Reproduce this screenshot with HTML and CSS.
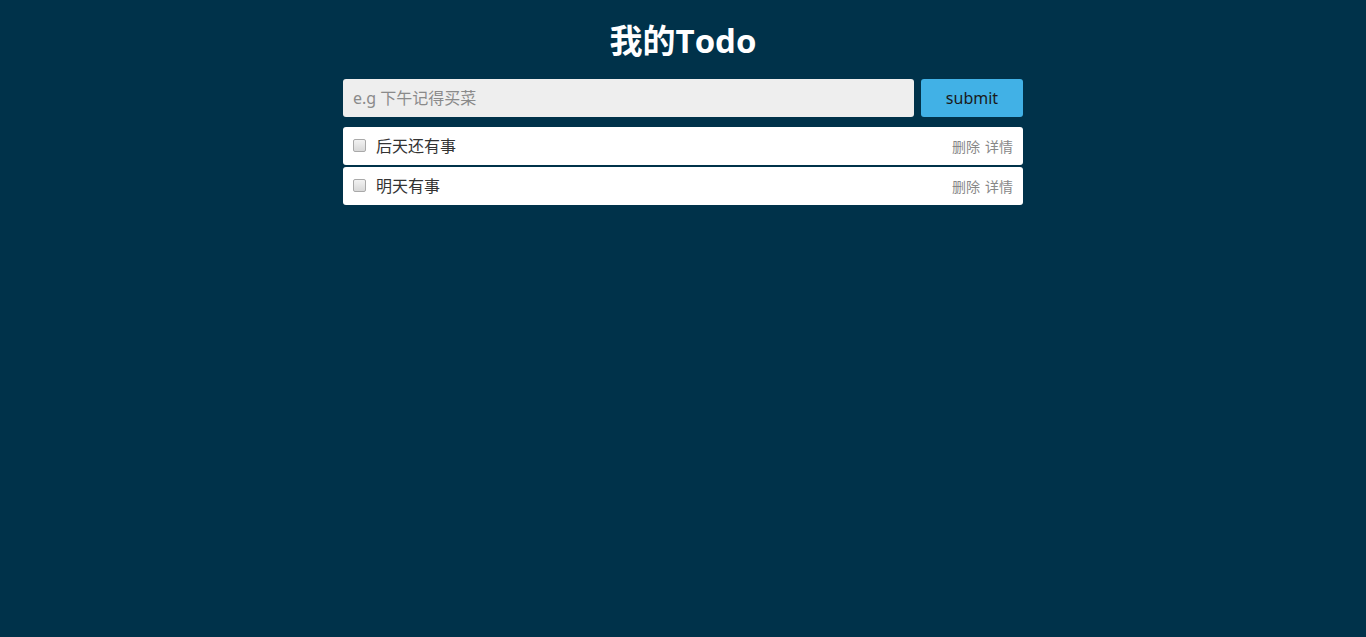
FILE: index.html
```html
<!DOCTYPE html>
<html lang="zh-CN">
<head>
<meta charset="utf-8">
<title>我的Todo</title>
<link rel="stylesheet" href="styles.css">
</head>
<body>
<div class="app">
  <h1 class="title">我的Todo</h1>
  <form class="add-form">
    <input class="add-input" type="text" placeholder="e.g 下午记得买菜">
    <button class="add-btn" type="button">submit</button>
  </form>
  <ul class="todo-list">
    <li class="todo-item">
      <span class="check"></span>
      <span class="todo-text">后天还有事</span>
      <span class="actions"><a class="action">删除</a><a class="action">详情</a></span>
    </li>
    <li class="todo-item">
      <span class="check"></span>
      <span class="todo-text">明天有事</span>
      <span class="actions"><a class="action">删除</a><a class="action">详情</a></span>
    </li>
  </ul>
</div>
</body>
</html>
```
FILE: styles.css
```css
html, body {
  margin: 0;
  padding: 0;
  background: #00324a;
  height: 100%;
}
body {
  font-family: "Noto Sans", "Noto Sans CJK SC", sans-serif;
  color: #333;
}
.app {
  width: 680px;
  margin: 0 auto;
}
.title {
  margin: 0;
  padding-top: 21px;
  height: 40px;
  line-height: 40px;
  font-family: "Open Sans", "Noto Sans CJK SC", sans-serif;
  font-size: 33px;
  font-weight: bold;
  color: #fff;
  text-align: center;
}
.add-form {
  display: flex;
  gap: 7px;
  margin-top: 18px;
}
.add-input {
  flex: 1;
  height: 38px;
  box-sizing: border-box;
  border: none;
  border-radius: 3px;
  background: #eeeeee;
  padding: 0 10px;
  font-family: "Noto Sans", "Noto Sans CJK SC", sans-serif;
  font-size: 16px;
  color: #333;
  outline: none;
}
.add-input::placeholder {
  color: #8a8a8a;
}
.add-btn {
  width: 102px;
  height: 38px;
  border: none;
  border-radius: 3px;
  background: #41b1e6;
  font-family: "Noto Sans", "Noto Sans CJK SC", sans-serif;
  font-size: 16px;
  color: #1a1a1a;
  padding: 0;
}
.todo-list {
  list-style: none;
  margin: 10px 0 0;
  padding: 0;
  display: flex;
  flex-direction: column;
  gap: 2px;
}
.todo-item {
  display: flex;
  align-items: center;
  height: 38px;
  background: #fff;
  border-radius: 3px;
  padding: 0 10px;
}
.check {
  width: 11px;
  height: 11px;
  border: 1px solid #a9a9a9;
  border-radius: 2px;
  background: linear-gradient(#f2f2f2, #d8d8d8);
  margin-right: 10px;
  margin-top: -2px;
}
.todo-text {
  flex: 1;
  font-size: 16px;
  color: #333;
  line-height: 20px;
}
.actions {
  display: flex;
  gap: 5px;
}
.action {
  font-size: 14px;
  color: #888;
  cursor: pointer;
}
```
